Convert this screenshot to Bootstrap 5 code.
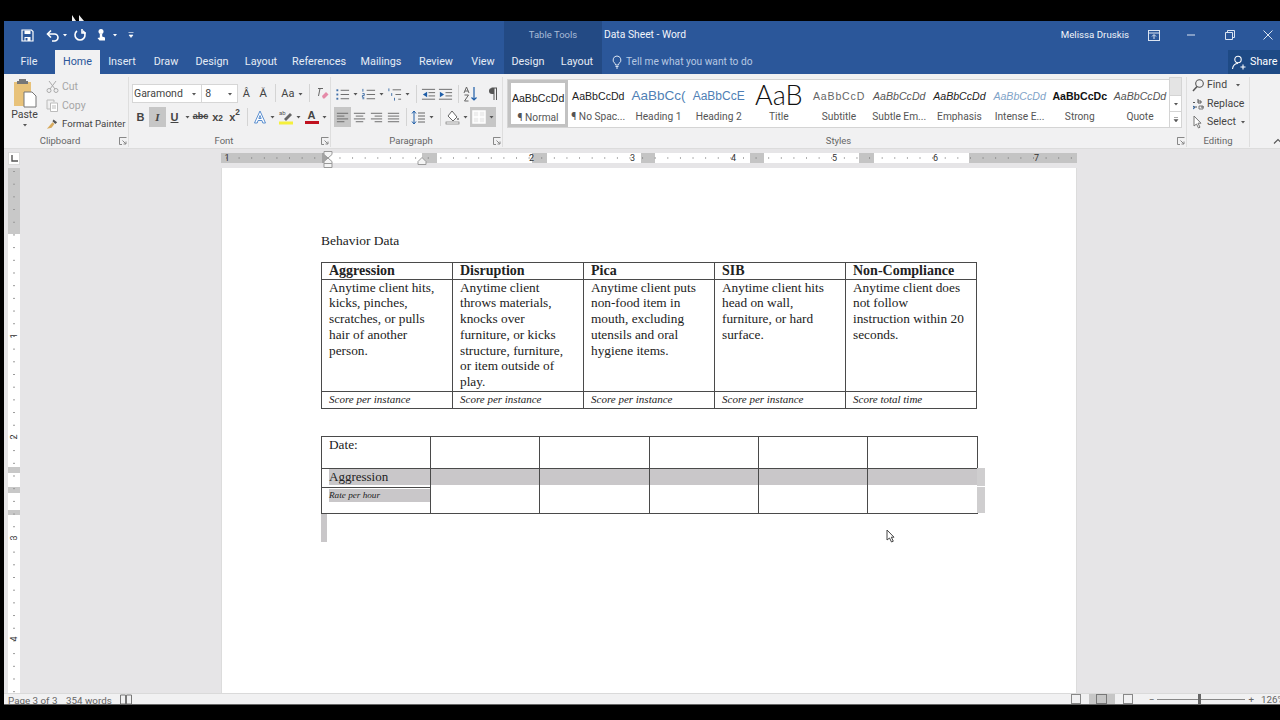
<!DOCTYPE html>
<html lang="en">
<head>
  <meta charset="UTF-8" />
  <title>Data Sheet - Word</title>
  <link href="https://cdn.jsdelivr.net/npm/bootstrap@5.3.3/dist/css/bootstrap.min.css" rel="stylesheet"/>
  <style>
    html, body { height: 720px; overflow: hidden; background: #000; }
    body { font-family: Roboto, sans-serif; font-size: 10px; color: #555; position: relative; }
    svg { display: block; flex: none; }
    .word-win { position: absolute; left: 4px; top: 21px; width: 1276px; height: 684px; display: flex; flex-direction: column; overflow: hidden; background: #f1f1f2; }

    /* title bar and tabs */
    .blue-head { height: 53px; background: #2b579a; color: #fff; flex: none; position: relative; }
    .head-row1 { height: 29px; padding-bottom: 1px; }
    .head-row2 { height: 24px; }
    .qat { width: 500px; padding-left: 17px; color: #fff; }
    .ctx-zone { width: 98px; background: #234a84; height: 100%; }
    .head-row1 .ctx-zone { height: 29px; margin-bottom: -1px; }
    .ctx-label { color: #a9bcd8; font-size: 9.5px; }
    .doc-title { font-size: 10.3px; margin-left: 2px; color: #f2f5fa; }
    .acct { font-size: 9.7px; margin-left: auto; margin-right: -3px; color: #f2f5fa; }
    .mi-22 { margin-left: 22px; } .mi-26 { margin-left: 26px; } .mi-29 { margin-left: 29px; }
    .close-ico { margin: 0 7px 0 28px; }
    .tabx { font-size: 10.8px; color: #e6ecf5; height: 24px; padding-top: 1px; }
    .tabx-on { background: #f1f1f2; color: #2b579a; margin-left: 1px; width: 45px !important; }
    .w42 { width: 42px; } .w44 { width: 44px; } .w48 { width: 48px; } .w50 { width: 50px; }
    .w52 { width: 52px; } .w58 { width: 58px; } .w66 { width: 66px; }
    .tell { color: #b7c8e2; font-size: 10.2px; margin-left: 10px; }
    .share-btn { width: 52px; height: 24px; margin-left: auto; background: #1e4a85; font-size: 10.8px; color: #fff; padding-left: 3px; }

    /* ribbon */
    .rib { height: 75px; flex: none; background: #f1f1f2; border-bottom: 1px solid #dcdcdc; padding-top: 3px; }
    .rib-g { display: flex; flex-direction: column; height: 70px; border-right: 1px solid #dedede; position: relative; flex: none; }
    .rib-lbl { height: 13px; text-align: center; font-size: 9.5px; color: #666; line-height: 13px; margin-top: auto; }
    .launch { position: absolute; right: 1px; bottom: 2px; }
    .g-clip { width: 125px; } .g-clip .rib-lbl { padding-right: 12px; }
    .g-font { width: 202px; padding-left: 3px; } .g-font .rib-lbl { padding-right: 14px; }
    .g-para { width: 172px; padding-left: 3px; } .g-para .rib-lbl { padding-right: 14px; }
    .g-styl { width: 684px; padding-left: 4px; } .g-styl .rib-lbl { padding-right: 16px; }
    .g-edit { width: 63px; }
    .fmt-stack { padding-left: 5px; white-space: nowrap; }
    .paste-col { width: 33px; margin-left: 4px; color: #444; font-size: 10.5px; line-height: 12px; }
    .clip-row { height: 19px; font-size: 10.5px; color: #444; }
    .clip-off { color: #a6a6a6; }
    .fmt-name { font-size: 9.6px; }
    .ico-sl { margin-right: 3px; }
    .fnt-stack { padding-top: 7px; }
    .fnt-row { height: 20px; }
    .fnt-row + .fnt-row { margin-top: 3px; }
    .cmb { height: 19px; background: #fff; border: 1px solid #d6d6d6; font-size: 10.5px; color: #444; padding: 0 3px 0 1px; }
    .cmb-a { width: 71px; }
    .cmb-b { width: 36px; border-left: 0; padding-left: 3px; }
    .slot { width: 17px; height: 20px; color: #444; font-size: 11px; }
    .slot-on { background: #c6c6c6; }
    .slot-abc { font-size: 9px; }
    .chv { width: 9px; height: 20px; }
    .sepr { width: 8px; height: 18px; }
    .sepr::after { content: ""; display: block; width: 1px; height: 18px; margin: 0 auto; background: #d4d4d4; }
    .nudge5 { width: 5px; }
    .font-b { font-weight: 700; font-family: "Liberation Sans", sans-serif; }
    .font-i { font-style: italic; font-weight: 700; font-family: "Liberation Serif", serif; }
    .gal { height: 49px; margin-top: 2px; background: #fff; border: 1px solid #d4d4d4; border-right: 0; width: 662px; }
    .sty { width: 60.2px; height: 47px; flex: none; color: #555; overflow: hidden; font-size: 10.2px; padding-top: 1px; }
    .sty-on { border: 3px solid #c2c2c2; padding-top: 0; }
    .sty-pv { height: 30px; font-family: "Liberation Sans", sans-serif; font-size: 10.6px; white-space: nowrap; overflow: hidden; width: 56px; color: #222; line-height: 30px; text-align: center; }
    .sty-nm { white-space: nowrap; line-height: 12px; }
    .pv-h { color: #4f7fb5; font-size: 13.5px; }
    .pv-h2 { color: #4f7fb5; font-size: 12px; }
    .pv-t { font-size: 27px; color: #111; line-height: 28px; height: 30px; font-family: Lato, sans-serif; font-weight: 300; }
    .pv-s { color: #666; letter-spacing: .8px; }
    .pv-i { font-style: italic; color: #555; }
    .pv-e { font-style: italic; color: #222; }
    .pv-ie { font-style: italic; color: #7fa3c8; }
    .pv-b { font-weight: 700; color: #111; }
    .gal-scr { width: 13px; }
    .gal-btn { height: 17px; border: 1px solid #d4d4d4; background: #fff; margin-bottom: -1px; }
    .gal-btn-off { background: #e4e4e4; height: 19px; }
    .edit-row { height: 18.5px; font-size: 10.5px; color: #444; padding-left: 5px; gap: 3px; }
    .edit-stack { margin-top: -1px; }
    .col-chevron { margin-left: 23px; margin-top: 61px; }

    /* horizontal ruler */
    .hruler-bar { height: 19px; flex: none; position: relative; background: #e6e5e7; }
    .tab-sel { position: absolute; left: 4px; top: 3px; width: 12px; height: 13px; background: #fff; border: 1px solid #dadada; }
    .hruler { position: absolute; left: 217px; top: 4px; width: 856px; height: 10px; display: flex; background: #fff; }
    .hr-g { background: #c4c4c4; height: 100%; flex: none; }
    .hr-d { background: #a3a3a3; }
    .hr-w { height: 100%; flex: none; }
    .hw6 { width: 6px; } .hw14 { width: 14px; } .hw15 { width: 15px; } .hw94 { width: 94px; } .hw95 { width: 95px; } .hw101 { width: 101px; } .hw108 { width: 108px; }
    .hr-ticks { position: absolute; inset: 0; background-image: linear-gradient(90deg, #777 1px, transparent 1px); background-size: 12.62px 2px; background-repeat: repeat-x; background-position: 5px 4px; opacity: .6; }
    .hr-nums { position: absolute; inset: 0; display: flex; font-size: 9px; line-height: 10px; color: #333; }
    .hr-n { width: 101px; flex: none; text-align: center; }
    .hr-n0 { width: 12px; flex: none; text-align: center; margin-right: 248px; }
    .indent-mark { position: absolute; top: 2px; left: 319px; }
    .indent-tri { position: absolute; left: 413px; top: 8px; }

    /* document area */
    .doc-wrap { flex: 1; display: flex; background: #e6e5e7; min-height: 0; position: relative; }
    .vruler { width: 12px; margin-left: 4px; flex: none; background: #fff; display: flex; flex-direction: column; font-size: 9px; color: #333; position: relative; }
    .vr-g { background: #c8c8c8; flex: none; }
    .vh5 { height: 5px; } .vh6 { height: 6px; } .vh14 { height: 14px; } .vh17 { height: 17px; } .vh66 { height: 66px; } .vh233 { height: 233px; }
    .vr-nums { position: absolute; inset: 0; display: flex; flex-direction: column; align-items: center; line-height: 10px; padding-top: 117px; }
    .vr-n { height: 101px; flex: none; display: flex; align-items: center; justify-content: center; }
    .vr-n span { display: block; transform: rotate(-90deg); background: inherit; }
    .vr-ticks { position: absolute; left: 5px; top: 3px; bottom: 0; width: 2px; background-image: linear-gradient(#999 0 1px, transparent 1px); background-size: 2px 12.7px; }
    .page-scroll { flex: 1; padding-left: 201px; min-width: 0; }
    .sheet { width: 856px; height: 525px; background: #fff; padding: 64px 100px 0 99px; position: relative; border-left: 1px solid #dcdcdc; border-right: 1px solid #dcdcdc; font-family: "Liberation Serif", serif; color: #222; font-size: 13.5px; }
    .sheet-h { line-height: 17px; margin-bottom: 13px; }
    table.wtab { width: 656px; table-layout: fixed; border-collapse: collapse; margin: 0; font-size: 13.3px; color: #222; }
    table.wtab td { border: 1px solid #4a4a4a; padding: 0 7px; vertical-align: top; line-height: 15.7px; }
    .t1-head td { height: 16px; font-weight: 700; font-size: 14px; }
    .t1-body td { height: 112px; }
    .t1-foot td { height: 17px; font-style: italic; font-size: 11px; }
    .tab-two { margin-top: 27px !important; }
    .t2-a td { height: 32px; }
    .t2-b td { height: 19px; }
    .t2-c td { height: 26px; }
    .cw109 { width: 109px; } .cw110 { width: 110px; }
    .shade-line { background: #c9c7c9; height: 16px; margin: 0 -7px; }
    .shade-first { background: #c9c7c9; height: 16px; font-size: 13px; margin-right: -7px; }
    .shade-rate { background: #c9c7c9; height: 13px; font-style: italic; font-size: 9.2px; line-height: 13px; margin: 1px -7px 0 0; }
    .sel-right { position: absolute; left: 755px; top: 300px; width: 8px; height: 45px; background: #cfcecf; }
    .sel-right::after { content: ""; display: block; height: 1px; background: #fff; position: relative; top: 18px; }
    .sel-para { position: absolute; left: 99px; top: 346px; width: 6px; height: 28px; background: #c9c7c9; }
    .mouse { position: absolute; left: 664px; top: 361px; }
    .top-mouse { position: absolute; left: 72px; top: 15px; }

    /* status bar */
    .stbar { height: 12px; flex: none; background: #f1f1f2; border-top: 1px solid #dadada; border-bottom: 1px solid #666; overflow: hidden; font-size: 9.8px; color: #666; line-height: 13px; position: relative; }
    .st-pg { margin-left: 4px; width: 58px; }
    .st-wd { width: 54px; }
    .st-v { width: 26px; height: 12px; }
    .st-v-on { background: #c6c6c6; }
    .st-right { margin-left: auto; }
    .zoom-track { width: 88px; height: 1px; background: #888; margin: 0 3px; position: relative; }
    .zoom-thumb { position: absolute; left: 41px; top: -5px; width: 3px; height: 10px; background: #666; }
    .zoom-pc { width: 19px; margin-left: 7px; white-space: nowrap; }
  </style>
</head>
<body>
<svg width="0" height="0" class="position-absolute">
  <symbol id="i-chev" viewBox="0 0 8 8"><path d="M2 3h4L4 5.500z" fill="#555"/></symbol>
  <symbol id="i-list" viewBox="0 0 16 16"><g fill="none" stroke="#666"><path d="M6 3.500h9M6 8h9M6 12.500h9"/></g><g fill="#3e6ea8"><rect x="1.500" y="2.500" width="2" height="2"/><rect x="1.500" y="7" width="2" height="2"/><rect x="1.500" y="11.500" width="2" height="2"/></g></symbol>
  <symbol id="i-num" viewBox="0 0 16 16"><g fill="none" stroke="#666"><path d="M6 3.500h9M6 8h9M6 12.500h9"/><path stroke="#3e6ea8" d="M2 2v3M1.500 7h2v2h-2v2h2M1.500 12.500h2"/></g></symbol>
  <symbol id="i-multi" viewBox="0 0 16 16"><g fill="none" stroke="#666"><path d="M6 3h9M9 8h6M12 13h3"/><path stroke="#3e6ea8" d="M2 1.500v3M5 6.500v3M8 11.500v3"/></g></symbol>
  <symbol id="i-out" viewBox="0 0 16 16"><g fill="none" stroke="#666"><path d="M1 2.500h14M8 6h7M8 9.500h7M1 13h14"/></g><path d="M6.500 5v6L2 8z" fill="#1f5ea8"/></symbol>
  <symbol id="i-in" viewBox="0 0 16 16"><g fill="none" stroke="#666"><path d="M1 2.500h14M8 6h7M8 9.500h7M1 13h14"/></g><path d="M2 5v6l4.500-3z" fill="#1f5ea8"/></symbol>
  <symbol id="i-al" viewBox="0 0 16 16"><path fill="none" stroke="#666" d="M2 3.500h12M2 6.500h8M2 9.500h12M2 12.500h8"/></symbol>
  <symbol id="i-ac" viewBox="0 0 16 16"><path fill="none" stroke="#666" d="M2 3.500h12M4 6.500h8M2 9.500h12M4 12.500h8"/></symbol>
  <symbol id="i-ar" viewBox="0 0 16 16"><path fill="none" stroke="#666" d="M2 3.500h12M6 6.500h8M2 9.500h12M6 12.500h8"/></symbol>
  <symbol id="i-aj" viewBox="0 0 16 16"><path fill="none" stroke="#666" d="M2 3.500h12M2 6.500h12M2 9.500h12M2 12.500h12"/></symbol>
  <symbol id="i-launch" viewBox="0 0 8 8"><path fill="none" stroke="#888" d="M.5 3V.5H7.500M.5.500V7.500H3M3.500 3.500L7 7M7 4.500V7H4.500"/></symbol>
</svg>

<svg class="top-mouse" width="14" height="6" viewBox="0 0 14 6"><path d="M0 0l4 6H0zM7 0l5 6H7z" fill="#eee"/></svg>

<div class="word-win">
  <div class="blue-head">
    <div class="head-row1 d-flex align-items-center">
      <div class="qat d-flex align-items-center h-100">
        <svg class="me-2" width="13" height="13" viewBox="0 0 13 13"><path d="M1 1h9.500L12 2.500V12H1z" fill="none" stroke="#fff" stroke-width="1.200"/><path d="M3.500 1.500h6v3.500h-6zM3.500 8h6v4h-6z" fill="#fff"/><path d="M4.500 9h2v2.500h-2z" fill="#2b579a"/></svg>
        <svg class="ms-1" width="15" height="13" viewBox="0 0 15 13"><path d="M5 1.500L1.500 5 5 8.500" fill="none" stroke="#fff" stroke-width="1.600"/><path d="M2 5h6.500a3.200 3.200 0 0 1 0 7H6" fill="none" stroke="#fff" stroke-width="1.600"/></svg>
        <svg width="8" height="8" viewBox="0 0 8 8"><path d="M2 3h4L4 5.500z" fill="#fff"/></svg>
        <svg class="ms-1" width="14" height="14" viewBox="0 0 14 14"><path d="M4 3a5 5 0 1 0 6 0" fill="none" stroke="#fff" stroke-width="1.600"/><path d="M9 1v4h4" fill="none" stroke="#fff" stroke-width="1.600"/></svg>
        <svg class="ms-2" width="12" height="14" viewBox="0 0 12 14"><circle cx="6" cy="3.500" r="2.500" fill="#fff"/><path d="M4.800 6h2.400v2.500l2.800 1V12.500H4.500L2.500 10l2.300-.5z" fill="#fff"/></svg>
        <svg class="ms-1" width="8" height="8" viewBox="0 0 8 8"><path d="M2 3h4L4 5.500z" fill="#fff"/></svg>
        <svg class="ms-2" width="8" height="8" viewBox="0 0 8 8"><path d="M1.500 1.500h5M2 4h4L4 6.500z" fill="#fff" stroke="#fff" stroke-width=".6"/></svg>
      </div>
      <div class="ctx-zone d-flex align-items-center justify-content-center ctx-label">Table Tools</div>
      <div class="doc-title">Data Sheet - Word</div>
      <div class="acct">Melissa Druskis</div>
      <svg class="mi-22" width="12" height="11" viewBox="0 0 12 11"><rect x=".5" y=".5" width="11" height="10" fill="none" stroke="#dbe4f1"/><path d="M.5 3h11" stroke="#dbe4f1"/><path d="M6 9V5M4 6.500L6 4.500 8 6.500" stroke="#dbe4f1" fill="none"/></svg>
      <svg class="mi-26" width="10" height="10" viewBox="0 0 10 10"><path d="M1 5h8" stroke="#dbe4f1"/></svg>
      <svg class="mi-29" width="10" height="10" viewBox="0 0 10 10"><path d="M.5 2.500h7v7h-7zM2.500 2.500V.5h7v7h-2" fill="none" stroke="#dbe4f1"/></svg>
      <svg class="close-ico" width="10" height="10" viewBox="0 0 10 10"><path d="M.5.500l9 9M9.500.500l-9 9" stroke="#dbe4f1"/></svg>
    </div>
    <div class="head-row2 d-flex align-items-center position-relative">
      <div class="tabx w50 d-flex align-items-center justify-content-center">File</div>
      <div class="tabx tabx-on d-flex align-items-center justify-content-center">Home</div>
      <div class="tabx w44 d-flex align-items-center justify-content-center">Insert</div>
      <div class="tabx w44 d-flex align-items-center justify-content-center">Draw</div>
      <div class="tabx w48 d-flex align-items-center justify-content-center">Design</div>
      <div class="tabx w50 d-flex align-items-center justify-content-center">Layout</div>
      <div class="tabx w66 d-flex align-items-center justify-content-center">References</div>
      <div class="tabx w58 d-flex align-items-center justify-content-center">Mailings</div>
      <div class="tabx w52 d-flex align-items-center justify-content-center">Review</div>
      <div class="tabx w42 d-flex align-items-center justify-content-center">View</div>
      <div class="ctx-zone d-flex">
        <div class="tabx w48 d-flex align-items-center justify-content-center">Design</div>
        <div class="tabx w50 d-flex align-items-center justify-content-center">Layout</div>
      </div>
      <div class="tell d-flex align-items-center gap-1">
        <svg width="10" height="14" viewBox="0 0 10 14"><path d="M5 1a4 4 0 0 0-2.300 7.200c.6.500.8 1 .8 1.800h3c0-.8.2-1.300.8-1.800A4 4 0 0 0 5 1zM3.500 11.500h3M4 13h2" fill="none" stroke="#dbe4f1"/></svg>
        <span>Tell me what you want to do</span>
      </div>
      <div class="share-btn d-flex align-items-center gap-1">
        <svg width="15" height="15" viewBox="0 0 15 15"><circle cx="7" cy="4.500" r="3.200" fill="none" stroke="#fff" stroke-width="1.100"/><path d="M1.500 14c.5-3.500 2.500-5.500 5.500-5.500M9.500 12h5M12 9.500v5" fill="none" stroke="#fff" stroke-width="1.100"/></svg>
        <span>Share</span>
      </div>
    </div>
  </div>

  <div class="rib d-flex">
    <div class="rib-g g-clip">
      <div class="d-flex">
        <div class="paste-col d-flex flex-column align-items-center">
          <svg width="26" height="32" viewBox="0 0 26 32"><path d="M2 5h17v24H2z" fill="#e8c27a"/><path d="M7 2h7v2h2v3H5V4h2z" fill="#777"/><path d="M12 15h8l4 4v11H12z" fill="#fff" stroke="#777"/></svg>
          <span>Paste</span>
          <svg width="8" height="8"><use href="#i-chev"/></svg>
        </div>
        <div class="fmt-stack">
          <div class="clip-row clip-off d-flex align-items-center"><svg class="ico-sl" width="13" height="13" viewBox="0 0 13 13"><path d="M3 1l6 8M10 1L4 9" stroke="#aaa" fill="none"/><circle cx="3" cy="10.500" r="2" fill="none" stroke="#aaa"/><circle cx="10" cy="10.500" r="2" fill="none" stroke="#aaa"/></svg><span>Cut</span></div>
          <div class="clip-row clip-off d-flex align-items-center"><svg class="ico-sl" width="13" height="13" viewBox="0 0 13 13"><path d="M1 1h7v2M1 1v9h3" stroke="#bbb" fill="#ececec"/><path d="M4.500 4h7v8.500h-7z" fill="#fff" stroke="#bbb"/><path d="M6 7h4M6 9h4" stroke="#bbb"/></svg><span>Copy</span></div>
          <div class="clip-row d-flex align-items-center"><svg class="ico-sl" width="13" height="13" viewBox="0 0 14 13"><path d="M8 1l4 3-2 2-3-3z" fill="#555"/><path d="M7 4l2 2-3 4-5 1z" fill="#d8ab5e"/></svg><span class="fmt-name">Format Painter</span></div>
        </div>
      </div>
      <div class="rib-lbl">Clipboard</div>
      <svg class="launch" width="8" height="8"><use href="#i-launch"/></svg>
    </div>

    <div class="rib-g g-font">
      <div class="fnt-stack">
        <div class="fnt-row d-flex align-items-start">
          <div class="cmb cmb-a d-flex align-items-center justify-content-between"><span>Garamond</span><svg width="8" height="8"><use href="#i-chev"/></svg></div>
          <div class="cmb cmb-b d-flex align-items-center justify-content-between"><span>8</span><svg width="8" height="8"><use href="#i-chev"/></svg></div>
          <div class="slot d-flex align-items-center justify-content-center">A&#770;</div>
          <div class="slot d-flex align-items-center justify-content-center">A&#780;</div>
          <div class="sepr"></div>
          <div class="slot d-flex align-items-center justify-content-center">Aa</div>
          <svg class="chv" width="8" height="20" viewBox="0 -6 8 20"><use href="#i-chev" width="8" height="8"/></svg>
          <div class="sepr"></div>
          <div class="slot d-flex align-items-center justify-content-center"><svg width="14" height="14" viewBox="0 0 14 14"><path d="M3 1.500h5M5 1.500L3.500 9" stroke="#666" fill="none"/><path d="M7 9l4-4 2.500 2.500-4 4H8z" fill="#e58aa8"/></svg></div>
        </div>
        <div class="fnt-row d-flex align-items-center">
          <div class="slot font-b d-flex align-items-center justify-content-center">B</div>
          <div class="slot slot-on font-i d-flex align-items-center justify-content-center">I</div>
          <div class="slot d-flex align-items-center justify-content-center text-decoration-underline font-b">U</div>
          <svg class="chv" width="8" height="20" viewBox="0 -6 8 20"><use href="#i-chev" width="8" height="8"/></svg>
          <div class="slot slot-abc d-flex align-items-center justify-content-center text-decoration-line-through font-b">abc</div>
          <div class="slot d-flex align-items-center justify-content-center font-b">x<sub>2</sub></div>
          <div class="slot d-flex align-items-center justify-content-center font-b">x<sup>2</sup></div>
          <div class="sepr"></div>
          <div class="slot d-flex align-items-center justify-content-center"><svg width="14" height="14" viewBox="0 0 14 14"><path d="M7 1l5.500 12H9.800L9 10.500H5L4.200 13H1.500zM5.800 8.500h2.400L7 5.500z" fill="#fff" stroke="#5b8fd0"/></svg></div>
          <svg class="chv" width="8" height="20" viewBox="0 -6 8 20"><use href="#i-chev" width="8" height="8"/></svg>
          <div class="slot d-flex align-items-center justify-content-center"><svg width="16" height="16" viewBox="0 0 16 16"><text x="1" y="6" font-size="6" fill="#555" font-family="Roboto">ab</text><path d="M6 10l6-6 2 2-6 6z" fill="#666"/><rect x="1" y="12.500" width="14" height="3" fill="#f5f03c"/></svg></div>
          <svg class="chv" width="8" height="20" viewBox="0 -6 8 20"><use href="#i-chev" width="8" height="8"/></svg>
          <div class="slot d-flex flex-column align-items-center justify-content-center"><span class="font-b lh-1">A</span><svg width="14" height="3"><rect width="14" height="3" fill="#c0111f"/></svg></div>
          <svg class="chv" width="8" height="20" viewBox="0 -6 8 20"><use href="#i-chev" width="8" height="8"/></svg>
        </div>
      </div>
      <div class="rib-lbl">Font</div>
      <svg class="launch" width="8" height="8"><use href="#i-launch"/></svg>
    </div>

    <div class="rib-g g-para">
      <div class="fnt-stack">
        <div class="fnt-row d-flex align-items-center">
          <div class="slot d-flex align-items-center justify-content-center"><svg width="15" height="15"><use href="#i-list"/></svg></div>
          <svg class="chv" width="8" height="20" viewBox="0 -6 8 20"><use href="#i-chev" width="8" height="8"/></svg>
          <div class="slot d-flex align-items-center justify-content-center"><svg width="15" height="15"><use href="#i-num"/></svg></div>
          <svg class="chv" width="8" height="20" viewBox="0 -6 8 20"><use href="#i-chev" width="8" height="8"/></svg>
          <div class="slot d-flex align-items-center justify-content-center"><svg width="15" height="15"><use href="#i-multi"/></svg></div>
          <svg class="chv" width="8" height="20" viewBox="0 -6 8 20"><use href="#i-chev" width="8" height="8"/></svg>
          <div class="sepr"></div>
          <div class="slot d-flex align-items-center justify-content-center"><svg width="15" height="15"><use href="#i-out"/></svg></div>
          <div class="slot d-flex align-items-center justify-content-center"><svg width="15" height="15"><use href="#i-in"/></svg></div>
          <div class="sepr"></div>
          <div class="slot d-flex align-items-center justify-content-center"><svg width="15" height="16" viewBox="0 0 15 16"><path d="M11 1v13M8.500 11.500L11 14l2.500-2.500" fill="none" stroke="#1f5ea8" stroke-width="1.200"/><path d="M1 7l2.500-6L6 7M1.800 5h3.400M1.500 9h4l-4 6h4" fill="none" stroke="#666"/></svg></div>
          <div class="nudge5"></div>
          <div class="slot d-flex align-items-center justify-content-center"><svg width="11" height="14" viewBox="0 0 11 14"><path d="M4.500 1H10M7 1v12M9.500 1v12" fill="none" stroke="#555"/><path d="M5 1a3 3 0 0 0 0 6h2V1z" fill="#555"/></svg></div>
        </div>
        <div class="fnt-row d-flex align-items-center">
          <div class="slot slot-on d-flex align-items-center justify-content-center"><svg width="15" height="15"><use href="#i-al"/></svg></div>
          <div class="slot d-flex align-items-center justify-content-center"><svg width="15" height="15"><use href="#i-ac"/></svg></div>
          <div class="slot d-flex align-items-center justify-content-center"><svg width="15" height="15"><use href="#i-ar"/></svg></div>
          <div class="slot d-flex align-items-center justify-content-center"><svg width="15" height="15"><use href="#i-aj"/></svg></div>
          <div class="sepr"></div>
          <div class="slot d-flex align-items-center justify-content-center"><svg width="15" height="15" viewBox="0 0 15 15"><path d="M3 1v13M1 3.500L3 1l2 2.500M1 11.500L3 14l2-2.500" fill="none" stroke="#1f5ea8"/><path d="M7 3h7M7 6h7M7 9h7M7 12h7" stroke="#666"/></svg></div>
          <svg class="chv" width="8" height="20" viewBox="0 -6 8 20"><use href="#i-chev" width="8" height="8"/></svg>
          <div class="sepr"></div>
          <div class="slot d-flex align-items-center justify-content-center"><svg width="15" height="15" viewBox="0 0 15 15"><path d="M7 1l5 6-4 4-5-5z" fill="#fff" stroke="#666"/><rect x="1" y="12" width="13" height="2" fill="#fff" stroke="#777" stroke-width=".7"/><circle cx="13" cy="9" r="1" fill="#777"/></svg></div>
          <svg class="chv" width="8" height="20" viewBox="0 -6 8 20"><use href="#i-chev" width="8" height="8"/></svg>
          <div class="slot slot-on d-flex align-items-center justify-content-center"><svg width="14" height="14" viewBox="0 0 14 14"><path d="M1 1h12v12H1zM7 1v12M1 7h12" fill="#eee" stroke="#fff" stroke-width="1.500"/></svg></div>
          <svg class="chv slot-on" width="9" height="20" viewBox="0 -6 8 20"><use href="#i-chev" width="8" height="8"/></svg>
        </div>
      </div>
      <div class="rib-lbl">Paragraph</div>
      <svg class="launch" width="8" height="8"><use href="#i-launch"/></svg>
    </div>

    <div class="rib-g g-styl">
      <div class="d-flex">
        <div class="gal d-flex">
          <div class="sty sty-on d-flex flex-column align-items-center"><div class="sty-pv">AaBbCcDd</div><div class="sty-nm">¶ Normal</div></div>
          <div class="sty d-flex flex-column align-items-center"><div class="sty-pv">AaBbCcDd</div><div class="sty-nm">¶ No Spac...</div></div>
          <div class="sty d-flex flex-column align-items-center"><div class="sty-pv pv-h">AaBbCc(</div><div class="sty-nm">Heading 1</div></div>
          <div class="sty d-flex flex-column align-items-center"><div class="sty-pv pv-h2">AaBbCcE</div><div class="sty-nm">Heading 2</div></div>
          <div class="sty d-flex flex-column align-items-center"><div class="sty-pv pv-t">AaB</div><div class="sty-nm">Title</div></div>
          <div class="sty d-flex flex-column align-items-center"><div class="sty-pv pv-s">AaBbCcD</div><div class="sty-nm">Subtitle</div></div>
          <div class="sty d-flex flex-column align-items-center"><div class="sty-pv pv-i">AaBbCcDd</div><div class="sty-nm">Subtle Em...</div></div>
          <div class="sty d-flex flex-column align-items-center"><div class="sty-pv pv-e">AaBbCcDd</div><div class="sty-nm">Emphasis</div></div>
          <div class="sty d-flex flex-column align-items-center"><div class="sty-pv pv-ie">AaBbCcDd</div><div class="sty-nm">Intense E...</div></div>
          <div class="sty d-flex flex-column align-items-center"><div class="sty-pv pv-b">AaBbCcDc</div><div class="sty-nm">Strong</div></div>
          <div class="sty d-flex flex-column align-items-center"><div class="sty-pv pv-i">AaBbCcDd</div><div class="sty-nm">Quote</div></div>
        </div>
        <div class="gal-scr mt-0">
          <div class="gal-btn gal-btn-off d-flex align-items-center justify-content-center"></div>
          <div class="gal-btn d-flex align-items-center justify-content-center"><svg width="8" height="8"><use href="#i-chev"/></svg></div>
          <div class="gal-btn d-flex align-items-center justify-content-center"><svg width="8" height="8" viewBox="0 0 8 8"><path d="M2 1.500h4M2 3.500h4L4 6z" fill="#555" stroke="#555" stroke-width=".5"/></svg></div>
        </div>
      </div>
      <div class="rib-lbl">Styles</div>
      <svg class="launch" width="8" height="8"><use href="#i-launch"/></svg>
    </div>

    <div class="rib-g g-edit">
      <div class="edit-stack">
        <div class="edit-row d-flex align-items-center"><svg width="12" height="13" viewBox="0 0 12 13"><circle cx="7.500" cy="4.500" r="3.800" fill="none" stroke="#555" stroke-width="1.100"/><path d="M5 7.500L1 12" stroke="#555" stroke-width="1.500"/></svg><span>Find</span><svg class="ms-1" width="8" height="8"><use href="#i-chev"/></svg></div>
        <div class="edit-row d-flex align-items-center"><svg width="12" height="14" viewBox="0 0 12 14"><path d="M1 5.500h2M6 2v4M6 4h3v2H6M1 10h4M9 10h3" fill="none" stroke="#555"/><path d="M1 9l2 1.500L1 12" fill="none" stroke="#1f5ea8"/><path d="M7 9h4v3H7z" fill="none" stroke="#777"/></svg><span>Replace</span></div>
        <div class="edit-row d-flex align-items-center"><svg width="12" height="14" viewBox="0 0 12 14"><path d="M2 1v10l2.500-2 2 4 1.500-.8-2-4H9z" fill="#fff" stroke="#777"/></svg><span>Select</span><svg width="8" height="8"><use href="#i-chev"/></svg></div>
      </div>
      <div class="rib-lbl">Editing</div>
    </div>
    <svg class="col-chevron" width="10" height="7" viewBox="0 0 10 7"><path d="M1 5.500L5 1.500 9 5.500" fill="none" stroke="#555" stroke-width="1.100"/></svg>
  </div>

  <div class="hruler-bar">
    <div class="tab-sel d-flex align-items-center justify-content-center"><svg width="7" height="7" viewBox="0 0 7 7"><path d="M1 0v6h6" fill="none" stroke="#555" stroke-width="1.400"/></svg></div>
    <div class="hruler">
      <div class="hr-g hw101"></div>
      <div class="hr-g hr-d hw6"></div>
      <div class="hr-w hw94"></div>
      <div class="hr-g hw15"></div>
      <div class="hr-w hw95"></div>
      <div class="hr-g hw15"></div>
      <div class="hr-w hw94"></div>
      <div class="hr-g hw14"></div>
      <div class="hr-w hw95"></div>
      <div class="hr-g hw14"></div>
      <div class="hr-w hw95"></div>
      <div class="hr-g hw15"></div>
      <div class="hr-w hw95"></div>
      <div class="hr-g hw108"></div>
      <div class="hr-ticks"></div>
      <div class="hr-nums">
        <div class="hr-n0">1</div>
        <div class="hr-n">2</div><div class="hr-n">3</div><div class="hr-n">4</div><div class="hr-n">5</div><div class="hr-n">6</div><div class="hr-n">7</div>
      </div>
    </div>
    <svg class="indent-mark" width="10" height="17" viewBox="0 0 10 17"><path d="M1 .5h8v3L5 7 1 3.500zM5 7l4 3.500v2H1v-2zM1 12.500h8v4H1z" fill="#f4f4f4" stroke="#999"/></svg>
    <svg class="indent-tri" width="10" height="8" viewBox="0 0 10 8"><path d="M5 .5l4 4v3H1v-3z" fill="#f4f4f4" stroke="#999"/></svg>
  </div>

  <div class="doc-wrap">
    <div class="vruler">
      <div class="vr-g vh66"></div>
      <div class="vh233"></div>
      <div class="vr-g vh6"></div>
      <div class="vh14"></div>
      <div class="vr-g vh6"></div>
      <div class="vh17"></div>
      <div class="vr-g vh5"></div>
      <div class="vr-ticks"></div>
      <div class="vr-nums"><div class="vr-n"><span>1</span></div><div class="vr-n"><span>2</span></div><div class="vr-n"><span>3</span></div><div class="vr-n"><span>4</span></div></div>
    </div>
    <div class="page-scroll">
      <div class="sheet">
        <div class="sheet-h">Behavior Data</div>
        <table class="wtab">
          <tr class="t1-head"><td>Aggression</td><td>Disruption</td><td>Pica</td><td>SIB</td><td>Non-Compliance</td></tr>
          <tr class="t1-body">
            <td>Anytime client hits,<br>kicks, pinches,<br>scratches, or pulls<br>hair of another<br>person.</td>
            <td>Anytime client<br>throws materials,<br>knocks over<br>furniture, or kicks<br>structure, furniture,<br>or item outside of<br>play.</td>
            <td>Anytime client puts<br>non-food item in<br>mouth, excluding<br>utensils and oral<br>hygiene items.</td>
            <td>Anytime client hits<br>head on wall,<br>furniture, or hard<br>surface.</td>
            <td>Anytime client does<br>not follow<br>instruction within 20<br>seconds.</td>
          </tr>
          <tr class="t1-foot"><td>Score per instance</td><td>Score per instance</td><td>Score per instance</td><td>Score per instance</td><td>Score total time</td></tr>
        </table>
        <table class="wtab tab-two">
          <colgroup><col class="cw109"><col class="cw109"><col class="cw110"><col class="cw109"><col class="cw109"><col class="cw110"></colgroup>
          <tr class="t2-a"><td>Date:</td><td></td><td></td><td></td><td></td><td></td></tr>
          <tr class="t2-b">
            <td><div class="shade-first">Aggression</div></td>
            <td rowspan="2"><div class="shade-line"></div></td><td rowspan="2"><div class="shade-line"></div></td><td rowspan="2"><div class="shade-line"></div></td><td rowspan="2"><div class="shade-line"></div></td><td rowspan="2"><div class="shade-line"></div></td>
          </tr>
          <tr class="t2-c"><td><div class="shade-rate">Rate per hour</div></td></tr>
        </table>
        <div class="sel-right"></div>
        <div class="sel-para"></div>
        <svg class="mouse" width="10" height="14" viewBox="0 0 10 14"><path d="M1 1v10l2.500-2 2 4 1.800-.8-2-4H8z" fill="#fff" stroke="#444"/></svg>
      </div>
    </div>
  </div>

  <div class="stbar d-flex">
    <div class="st-pg">Page 3 of 3</div>
    <div class="st-wd">354 words</div>
    <svg width="12" height="10" viewBox="0 0 12 10"><path d="M.5 1h5v9h-5zM6.500 1h5v9h-5z" fill="none" stroke="#777"/></svg>
    <div class="st-right d-flex align-items-center">
      <svg class="me-2" width="10" height="10" viewBox="0 0 10 10"><rect x=".5" y=".5" width="9" height="9" fill="none" stroke="#888"/></svg>
      <div class="st-v st-v-on d-flex align-items-center justify-content-center"><svg width="11" height="10" viewBox="0 0 11 10"><rect x=".5" y=".5" width="10" height="9" fill="none" stroke="#777"/></svg></div>
      <svg class="ms-2 me-3" width="10" height="10" viewBox="0 0 10 10"><rect x=".5" y=".5" width="9" height="9" fill="none" stroke="#888"/></svg>
      <span>&minus;</span>
      <div class="zoom-track"><div class="zoom-thumb"></div></div>
      <span>+</span>
      <div class="zoom-pc">126%</div>
    </div>
  </div>
</div>
<script src="https://cdn.jsdelivr.net/npm/bootstrap@5.3.3/dist/js/bootstrap.bundle.min.js"></script>
</body>
</html>
